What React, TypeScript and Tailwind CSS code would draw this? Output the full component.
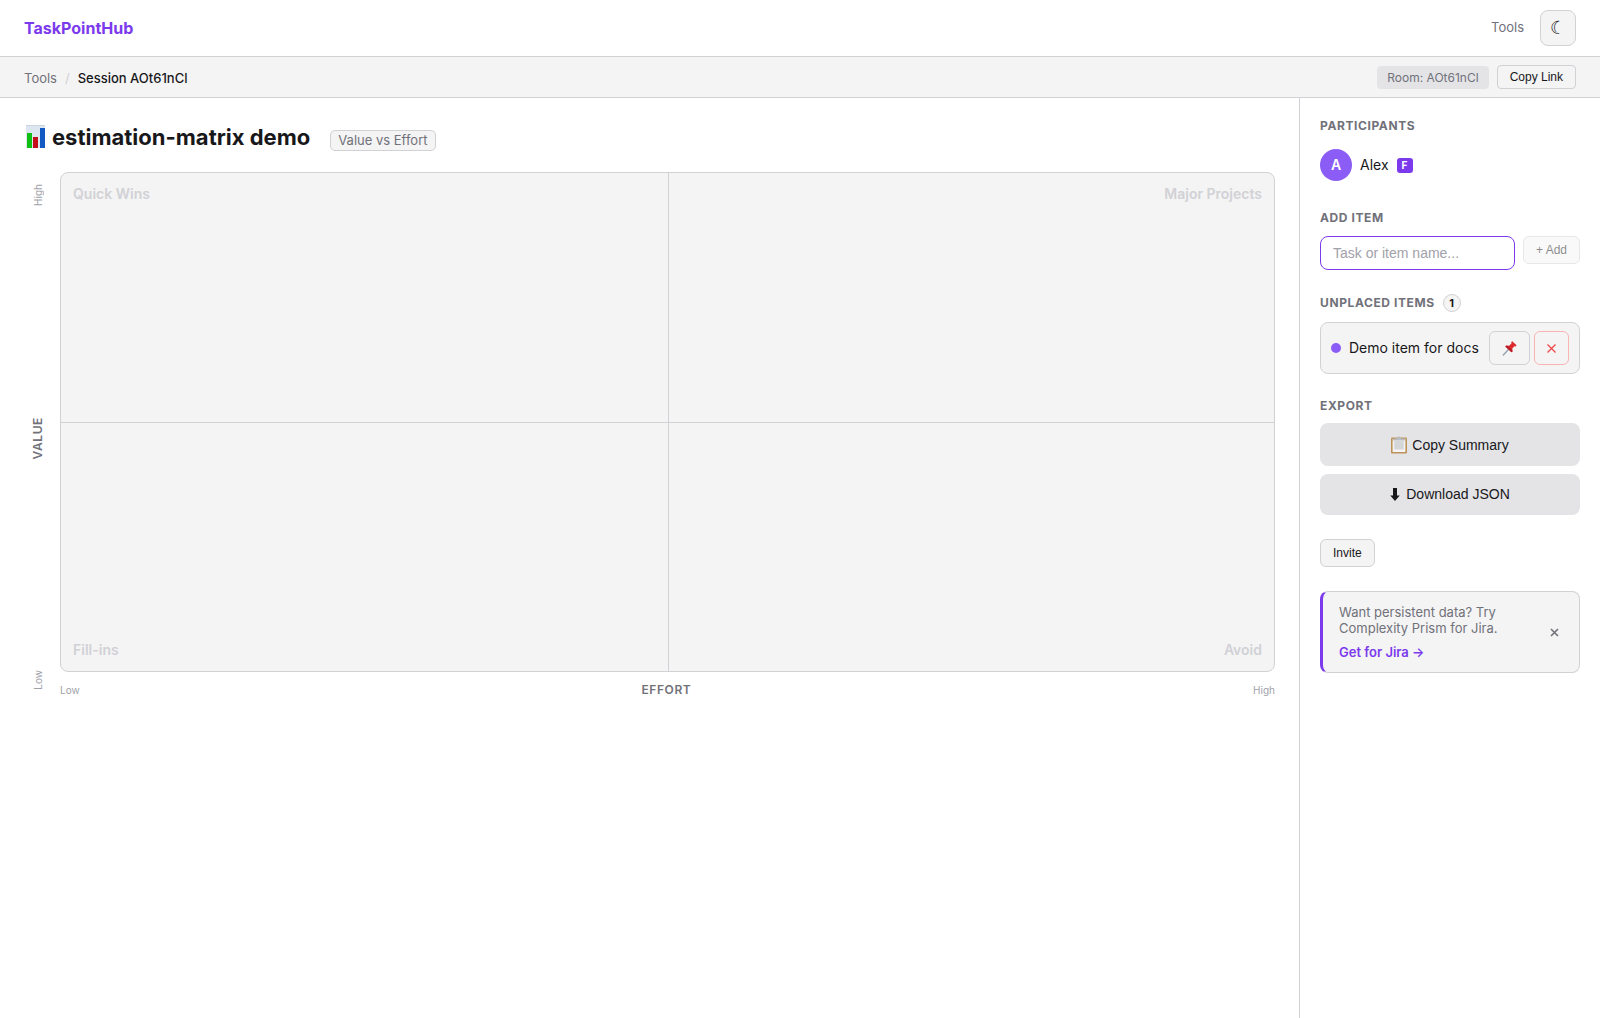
import React from 'react';

const quadrants = [
  { label: 'Quick Wins', className: 'items-start justify-start' },
  { label: 'Major Projects', className: 'border-l items-start justify-end' },
  { label: 'Fill-ins', className: 'border-t items-end justify-start' },
  { label: 'Avoid', className: 'border-l border-t items-end justify-end' }
];

const participants = [{ name: 'Alex', initial: 'A', facilitator: true }];

const unplacedItems = [{ id: 1, name: 'Demo item for docs' }];

function ChartIcon() {
  return (
    <svg className="w-[22px] h-6 shrink-0" viewBox="0 0 22 24" aria-hidden="true">
      <rect x="2" y="0" width="19" height="23" fill="#dde6ee" />
      <rect x="2" y="0" width="19" height="1" fill="#c9d6e2" />
      <rect x="3" y="8" width="5" height="15" fill="#0fbf14" />
      <rect x="9" y="12" width="5" height="11" fill="#c40d18" />
      <rect x="16" y="3" width="5" height="20" fill="#1259c3" />
    </svg>
  );
}

function PinIcon() {
  return (
    <svg className="w-4 h-4" viewBox="0 0 16 16" aria-hidden="true">
      <path d="M6.5 9.5 1.3 15" stroke="#8d9cab" strokeWidth="1.2" strokeLinecap="round" />
      <path
        d="M10.2 1.3 14.6 5.3 13.6 6.4 12.4 6.2 10.3 8.6 10.6 11.2 9.5 12.3 3.3 6.5 4.4 5.5 7 5.8 9.5 3.6 9.2 2.3Z"
        fill="#dc2a2f"
      />
      <path d="M3.3 6.5 9.5 12.3 10.6 11.2 9.8 10 6 6.6 4.4 5.5Z" fill="#b01c26" />
    </svg>
  );
}

function ClipboardIcon() {
  return (
    <svg className="w-4 h-[18px]" viewBox="0 0 16 18" aria-hidden="true">
      <rect x="0" y="1.5" width="16" height="16" rx="1.2" fill="#bd9258" />
      <rect x="1.6" y="3" width="12.8" height="13" fill="#f4f4f4" />
      <rect x="3.2" y="5" width="9.6" height="8.5" fill="#d5d6d8" />
      <path d="M2 4.4V2.6h3.6C6 1 6.9.4 8 .4s2 .6 2.4 2.2H14v1.8Z" fill="#b9bcc1" />
    </svg>
  );
}

function ArrowDownIcon() {
  return (
    <svg className="w-[10px] h-[13px]" viewBox="0 0 10 13" aria-hidden="true">
      <path d="M3 0h4v7.5h2.7L5 13 .3 7.5H3Z" fill="#18181b" />
    </svg>
  );
}

function SectionTitle({ children }: { children: React.ReactNode }) {
  return (
    <h2 className="text-xs leading-4 font-bold uppercase tracking-wider text-[#71717a]">
      {children}
    </h2>
  );
}

function Header() {
  return (
    <header className="flex items-center justify-between px-6 h-[57px] border-b border-[#d1d1d6]">
      <a href="#" className="text-base font-bold text-[#7c3aed]">TaskPointHub</a>
      <nav className="flex items-center gap-4">
        <a href="#" className="text-[13px] text-[#71717a]">Tools</a>
        <button
          type="button"
          aria-label="Toggle theme"
          className="w-9 h-9 flex items-center justify-center rounded-lg border border-[#d1d1d6] bg-[#f4f4f4] text-lg text-[#18181b]"
        >
          ☾
        </button>
      </nav>
    </header>
  );
}

function SessionBar() {
  return (
    <div className="flex items-center justify-between px-6 h-[41px] border-b border-[#d1d1d6] bg-[#f4f4f4]">
      <div className="flex items-center gap-2 pt-px text-[13px] leading-5">
        <a href="#" className="text-[#71717a]">Tools</a>
        <span className="text-[#d1d1d6]">/</span>
        <span className="font-medium text-[#18181b]">Session AOt61nCl</span>
      </div>
      <div className="flex items-center gap-2">
        <span className="px-[10px] py-1 rounded bg-[#e4e4e7] text-xs leading-[15px] text-[#71717a]">
          Room: AOt61nCl
        </span>
        <button
          type="button"
          className="px-3 h-6 rounded border border-[#d1d1d6] bg-[#f4f4f4] font-['Liberation_Sans',sans-serif] text-xs text-[#18181b]"
        >
          Copy Link
        </button>
      </div>
    </div>
  );
}

function Matrix() {
  return (
    <div className="flex gap-2">
      <div className="w-7 pt-3 pb-5 flex flex-col items-center justify-between text-[10px] leading-4 text-[#a1a1aa]">
        <span className="[writing-mode:vertical-rl] rotate-180">High</span>
        <span className="[writing-mode:vertical-rl] rotate-180 text-xs leading-4 font-semibold tracking-wider text-[#71717a]">
          VALUE
        </span>
        <span className="[writing-mode:vertical-rl] rotate-180">Low</span>
      </div>
      <div className="flex-1">
        <div className="grid grid-cols-2 grid-rows-2 h-[500px] rounded-lg border border-[#d1d1d6] bg-[#f4f4f4] overflow-hidden">
          {quadrants.map((quadrant) => (
            <div
              key={quadrant.label}
              className={`flex p-3 border-[#d1d1d6] text-sm leading-[18px] font-semibold text-[#d1d1d6] ${quadrant.className}`}
            >
              {quadrant.label}
            </div>
          ))}
        </div>
        <div className="flex items-center justify-between pt-[10px] pb-3 text-[10px] leading-4 text-[#a1a1aa]">
          <span>Low</span>
          <span className="text-xs leading-4 font-semibold tracking-wider text-[#71717a]">EFFORT</span>
          <span>High</span>
        </div>
      </div>
    </div>
  );
}

function Sidebar() {
  return (
    <aside className="w-[301px] shrink-0 p-5 border-l border-[#d1d1d6] flex flex-col gap-6">
      <section>
        <SectionTitle>Participants</SectionTitle>
        <ul className="mt-[10px]">
          {participants.map((person) => (
            <li key={person.name} className="flex items-center gap-2 py-[5px] text-sm text-[#18181b]">
              <span className="w-8 h-8 flex items-center justify-center rounded-full bg-[#8b5cf6] font-semibold text-white">
                {person.initial}
              </span>
              {person.name}
              {person.facilitator && (
                <span className="w-4 rounded-[3px] bg-[#7c3aed] text-center text-[10px] leading-[15px] font-bold text-white">
                  F
                </span>
              )}
            </li>
          ))}
        </ul>
      </section>

      <section>
        <SectionTitle>Add item</SectionTitle>
        <form className="mt-[10px] flex items-start gap-2">
          <input
            type="text"
            aria-label="Task or item name"
            placeholder="Task or item name..."
            className="flex-1 min-w-0 h-[34px] px-3 rounded-lg border border-[#7c3aed] bg-white font-['Liberation_Sans',sans-serif] text-sm outline-none placeholder:text-[#a1a1aa]"
          />
          <button
            type="button"
            disabled
            className="px-3 h-7 rounded-md border border-[#d1d1d6] bg-[#f4f4f4] font-['Liberation_Sans',sans-serif] text-xs text-[#18181b] opacity-50"
          >
            + Add
          </button>
        </form>
      </section>

      <section>
        <div className="flex items-center gap-2">
          <SectionTitle>Unplaced items</SectionTitle>
          <span className="w-[18px] h-[18px] flex items-center justify-center rounded-full border border-[#d1d1d6] bg-[#f4f4f4] text-[11px] font-bold text-[#18181b]">
            {unplacedItems.length}
          </span>
        </div>
        <ul className="mt-[10px]">
          {unplacedItems.map((item) => (
            <li
              key={item.id}
              className="flex items-center gap-1 px-[10px] py-2 rounded-lg border border-[#d1d1d6] bg-[#f4f4f4]"
            >
              <span className="w-[10px] h-[10px] mr-1 rounded-full bg-[#8b5cf6]" />
              <span className="flex-1 text-sm text-[#18181b]">{item.name}</span>
              <button
                type="button"
                aria-label="Place item"
                className="w-[41px] h-[34px] flex items-center justify-center rounded-md border border-[#d1d1d6]"
              >
                <PinIcon />
              </button>
              <button
                type="button"
                aria-label="Remove item"
                className="w-[35px] h-[34px] flex items-center justify-center rounded-md border border-[#f8b4b4]"
              >
                <svg className="w-[9px] h-[9px]" viewBox="0 0 9 9" aria-hidden="true">
                  <path d="M0.5 0.5L8.5 8.5M8.5 0.5L0.5 8.5" stroke="#ef4444" strokeWidth="1.2" />
                </svg>
              </button>
            </li>
          ))}
        </ul>
      </section>

      <section>
        <SectionTitle>Export</SectionTitle>
        <div className="mt-[9px] flex flex-col gap-2 font-['Liberation_Sans',sans-serif] text-sm text-[#18181b]">
          <button type="button" className="h-[43px] pt-px flex items-center justify-center gap-[5px] rounded-lg bg-[#e4e4e7]">
            <ClipboardIcon />
            Copy Summary
          </button>
          <button type="button" className="h-[41px] pb-px flex items-center justify-center gap-[6px] rounded-lg bg-[#e4e4e7]">
            <ArrowDownIcon />
            Download JSON
          </button>
        </div>
      </section>

      <button
        type="button"
        className="self-start px-3 h-7 rounded-md border border-[#d1d1d6] bg-[#f4f4f4] font-['Liberation_Sans',sans-serif] text-xs text-[#18181b]"
      >
        Invite
      </button>

      <div className="flex items-center justify-between pl-4 pr-5 py-3 rounded-lg border border-l-[3px] border-[#d1d1d6] border-l-[#7c3aed] bg-[#f4f4f4] text-[13px] leading-4">
        <div className="w-[170px]">
          <p className="text-[#71717a]">Want persistent data? Try Complexity Prism for Jira.</p>
          <a href="#" className="block mt-2 font-semibold text-[#7c3aed]">Get for Jira →</a>
        </div>
        <button type="button" aria-label="Dismiss" className="text-[#71717a]">
          <svg className="w-[9px] h-[9px]" viewBox="0 0 9 9" aria-hidden="true">
            <path d="M1 1L8 8M8 1L1 8" stroke="currentColor" strokeWidth="1.6" />
          </svg>
        </button>
      </div>
    </aside>
  );
}

function App() {
  return (
    <div className="min-h-screen flex flex-col bg-white font-['Inter',sans-serif]">
      <Header />
      <SessionBar />
      <div className="flex-1 flex">
        <main className="flex-1 p-6">
          <div className="flex items-center gap-5 mb-5">
            <h1 className="flex items-center gap-[6px] text-[22px] leading-[30px] font-bold text-[#18181b]">
              <ChartIcon />
              estimation-matrix demo
            </h1>
            <span className="mt-[6px] px-[7px] rounded-[5px] border border-[#d1d1d6] bg-[#f4f4f4] text-[13px] leading-[19px] text-[#71717a]">
              Value vs Effort
            </span>
          </div>
          <Matrix />
        </main>
        <Sidebar />
      </div>
    </div>
  );
}

export default App;
